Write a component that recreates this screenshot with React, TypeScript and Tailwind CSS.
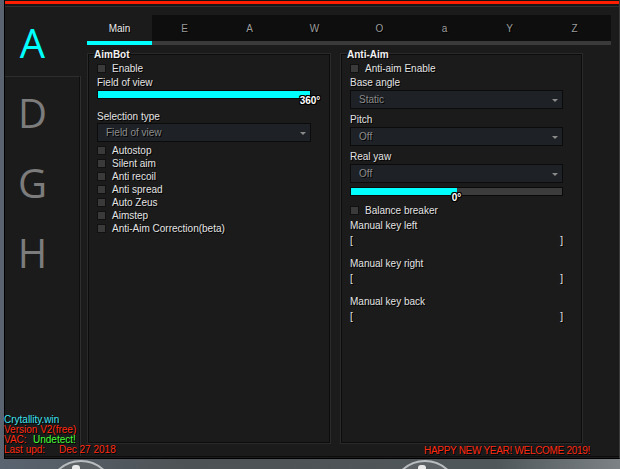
import React from "react";

const shadow = "[text-shadow:1px_1px_0_#000]";
const outline =
  "[text-shadow:1px_0_0_#000,-1px_0_0_#000,0_1px_0_#000,0_-1px_0_#000,1px_1px_0_#000,-1px_-1px_0_#000,1px_-1px_0_#000,-1px_1px_0_#000]";

const tabs = ["Main", "E", "A", "W", "O", "a", "Y", "Z"];

function Check({ label, className = "" }: { label: string; className?: string }) {
  return (
    <div className={`flex h-[13px] items-center ${className}`}>
      <span className="h-[9px] w-[9px] shrink-0 border border-[#111] bg-[#3a3a3a]" />
      <span className={`ml-[6px] leading-[13px] ${shadow}`}>{label}</span>
    </div>
  );
}

function Label({ children, className = "" }: { children: React.ReactNode; className?: string }) {
  return <div className={`h-[13px] leading-[13px] ${shadow} ${className}`}>{children}</div>;
}

function Dropdown({ value, width, className = "" }: { value: string; width: string; className?: string }) {
  return (
    <div
      className={`relative flex h-[19px] items-center border border-[#0b0b0b] bg-[#1e2226] pl-[8px] text-[#8c8c8c] ${shadow} ${width} ${className}`}
    >
      {value}
      <svg className="absolute right-[4px] top-[8px]" width="6" height="3" viewBox="0 0 6 3">
        <path d="M0 0H6L3 3Z" fill="#8a8a8a" />
      </svg>
    </div>
  );
}

function Slider({
  value,
  fill,
  knob,
  width,
  className = "",
}: {
  value: string;
  fill: string;
  knob: string;
  width: string;
  className?: string;
}) {
  return (
    <div className={`relative h-[9px] border border-[#0a0a0a] bg-[#3c3c3c] ${width} ${className}`}>
      <div className={`h-full bg-[#00ffff] ${fill}`} />
      <span
        className={`absolute top-[5px] -translate-x-1/2 text-[10px] font-bold leading-[10px] text-white ${outline} ${knob}`}
      >
        {value}
      </span>
    </div>
  );
}

function Brackets({ className = "" }: { className?: string }) {
  return (
    <div className={`flex h-[13px] w-[213px] justify-between leading-[13px] ${shadow} ${className}`}>
      <span>[</span>
      <span>]</span>
    </div>
  );
}

function GroupBox({ title, width, children }: { title: string; width: string; children: React.ReactNode }) {
  return (
    <div
      className={`relative h-[389px] border border-[#0c0c0c] bg-[#1b1b1b] px-[8px] pt-[7px] shadow-[0_0_0_1px_#2a2a2a] ${width}`}
    >
      <span
        className={`absolute -top-[5px] left-[5px] bg-[#1b1b1b] text-[10px] font-bold leading-[10px] text-[#f2f2f2] ${shadow}`}
      >
        {title}
      </span>
      {children}
    </div>
  );
}

export default function App() {
  return (
    <div className="relative h-[469px] w-[620px] overflow-hidden bg-[linear-gradient(90deg,#5a6470_0%,#4d5254_30%,#50575a_80%,#7c8286_100%)] pl-[4px] font-['Liberation_Sans',Arial,sans-serif] text-[10px] text-[#e4e4e4]">
      {/* scenery peeking under the window */}
      <div className="absolute left-[47px] top-[460px] h-[70px] w-[68px] rounded-full border-2 border-[#b9bdbf] bg-[#5b6164]" />
      <div className="absolute left-[391px] top-[460px] h-[70px] w-[68px] rounded-full border-2 border-[#b9bdbf] bg-[#5b6164]" />
      <div className="absolute left-[72px] top-[465px] h-[6px] w-[8px] rounded-full bg-[#e8e8e8]" />
      <div className="absolute left-[418px] top-[465px] h-[6px] w-[8px] rounded-full bg-[#e8e8e8]" />

      <div className="relative h-[459px] w-[616px] border-l border-r border-b border-l-black border-r-[#3a3a3a] border-b-black bg-[#1b1b1b]">
        {/* top chrome */}
        <div className="h-[1px] bg-[#141414]" />
        <div className="h-[3px] bg-[#ff1e00]" />
        <div className="h-[2px] bg-[#171717]" />
        <div className="h-[1px] bg-[#303030]" />

        <div className="flex h-[449px]">
          {/* sidebar */}
          <div className="flex w-[75px] flex-col font-['Open_Sans','Noto_Sans',sans-serif] text-[40px] font-normal leading-none">
            <div className="flex h-[69px] w-[55px] items-center justify-center pt-[2px] text-[#00ffff]">A</div>
            <div className="flex-1 border-t border-r border-t-[#2e2e2e] border-r-[#0e0e0e] shadow-[1px_0_0_#2e2e2e] text-[#7c7c7c]">
              {["D", "G", "H"].map((l) => (
                <div key={l} className="flex h-[70px] w-[55px] items-center justify-center pt-[1px]">
                  {l}
                </div>
              ))}
            </div>
          </div>

          {/* content */}
          <div className="flex flex-1 flex-col">
            <div className="ml-[7px] mr-[8px] mt-[8px]">
              <div className="flex h-[26px] bg-[#0e0e0e]">
                {tabs.map((t, i) => (
                  <div
                    key={t + i}
                    className={`flex w-[65px] items-center justify-center ${shadow} ${
                      i === 0 ? "bg-[#1b1b1b] text-[#ececec]" : "text-[#9c9c9c]"
                    }`}
                  >
                    {t}
                  </div>
                ))}
              </div>
              <div className="h-[4px] bg-[#3a3a3a]">
                <div className="h-full w-[65px] bg-[#00ffff]" />
              </div>
            </div>

            <div className="ml-[8px] mt-[9px] flex gap-[11px]">
              <GroupBox title="AimBot" width="w-[242px]">
                <Check label="Enable" />
                <Label className="mt-[1px]">Field of view</Label>
                <Slider value="360°" fill="w-full" knob="left-full" width="w-[214px]" className="mt-[1px]" />
                <Label className="mt-[11px]">Selection type</Label>
                <Dropdown value="Field of view" width="w-[214px]" />
                <div className="mt-[2px]">
                  {["Autostop", "Silent aim", "Anti recoil", "Anti spread", "Auto Zeus", "Aimstep", "Anti-Aim Correction(beta)"].map(
                    (c) => (
                      <Check key={c} label={c} />
                    )
                  )}
                </div>
              </GroupBox>

              <GroupBox title="Anti-Aim" width="w-[241px]">
                <Check label="Anti-aim Enable" />
                <Label className="mt-[1px]">Base angle</Label>
                <Dropdown value="Static" width="w-[213px]" className="mt-[1px]" />
                <Label className="mt-[4px]">Pitch</Label>
                <Dropdown value="Off" width="w-[213px]" className="mt-[1px]" />
                <Label className="mt-[4px]">Real yaw</Label>
                <Dropdown value="Off" width="w-[213px]" className="mt-[1px]" />
                <Slider value="0°" fill="w-1/2" knob="left-1/2" width="w-[213px]" className="mt-[4px]" />
                <Check label="Balance breaker" className="mt-[8px]" />
                <Label className="mt-[2px]">Manual key left</Label>
                <Brackets className="mt-[2px]" />
                <Label className="mt-[10px]">Manual key right</Label>
                <Brackets className="mt-[2px]" />
                <Label className="mt-[10px]">Manual key back</Label>
                <Brackets className="mt-[2px]" />
              </GroupBox>
            </div>

            <div className={`flex flex-1 items-center justify-end pr-[29px] text-[10px] tracking-[-0.3px] text-[#ff2a12] ${shadow}`}>
              HAPPY NEW YEAR! WELCOME 2019!
            </div>
          </div>
        </div>

        <div className="h-[1px] bg-[#0c0c0c]" />
        <div className="h-[1px] bg-[#1b1b1b]" />

        {/* info overlay */}
        <div className={`absolute -left-[1px] top-[415px] text-[10px] leading-[10px] ${shadow}`}>
          <div className="text-[#3fe3f2]">Crytallity.win</div>
          <div className="text-[#ff2a12]">Version V2(free)</div>
          <div>
            <span className="inline-block w-[29px] text-[#ff2a12]">VAC:</span>
            <span className="text-[#45ff35]">Undetect!</span>
          </div>
          <div>
            <span className="inline-block w-[55px] text-[#ff2a12]">Last upd:</span>
            <span className="text-[#ff2a12]">Dec 27 2018</span>
          </div>
        </div>
      </div>
    </div>
  );
}
